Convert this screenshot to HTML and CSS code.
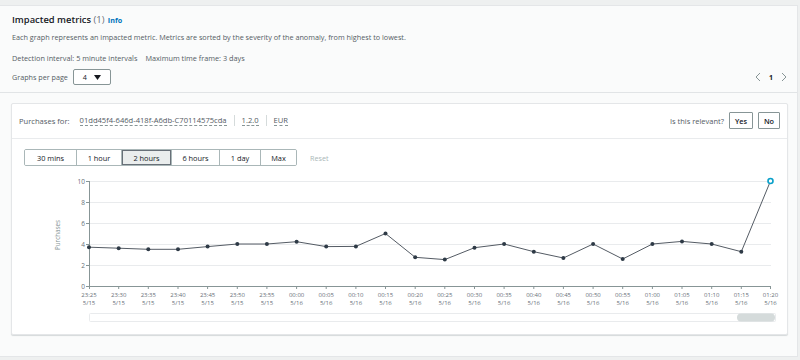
FILE: index.html
```html
<!DOCTYPE html>
<html>
<head>
<meta charset="utf-8">
<link rel="stylesheet" href="styles.css">
</head>
<body>
<div class="panel">
  <div class="header">
    <h2 class="title">Impacted metrics <span class="count">(1)</span> <a class="info">Info</a></h2>
    <p class="desc">Each graph represents an impacted metric. Metrics are sorted by the severity of the anomaly, from highest to lowest.</p>
    <p class="meta"><span>Detection interval: 5 minute intervals</span><span>Maximum time frame: 3 days</span></p>
    <div class="controls">
      <div class="gpp">
        <span>Graphs per page</span>
        <div class="select"><span>4</span><svg width="7" height="5" viewBox="0 0 7 5"><path d="M0 0H7L3.5 5Z" fill="#16191f"/></svg></div>
      </div>
      <div class="pager">
        <svg width="6" height="10" viewBox="0 0 6 10"><path d="M5 1L1 5L5 9" fill="none" stroke="#879596" stroke-width="1"/></svg>
        <span class="page">1</span>
        <svg width="6" height="10" viewBox="0 0 6 10"><path d="M1 1L5 5L1 9" fill="none" stroke="#879596" stroke-width="1"/></svg>
      </div>
    </div>
  </div>
  <div class="body">
    <div class="card">
      <div class="card-head">
        <div class="crumbs">
          <span class="label">Purchases for:</span>
          <span class="dotted">01dd45f4-646d-418f-A6db-C70114575cda</span>
          <span class="sep"></span>
          <span class="dotted">1.2.0</span>
          <span class="sep"></span>
          <span class="dotted">EUR</span>
        </div>
        <div class="relevant">
          <span class="label">Is this relevant?</span>
          <button class="btn">Yes</button>
          <button class="btn">No</button>
        </div>
      </div>
      <div class="tools">
        <div class="seg">
          <button class="s s1">30 mins</button>
          <button class="s s2">1 hour</button>
          <button class="s s3 active">2 hours</button>
          <button class="s s4">6 hours</button>
          <button class="s s5">1 day</button>
          <button class="s s6">Max</button>
        </div>
        <span class="reset">Reset</span>
      </div>
      <svg class="chart" width="774" height="164" viewBox="0 0 774 164">
        <g class="grid">
          <line x1="77" y1="11.5" x2="759" y2="11.5"/>
          <line x1="77" y1="32.5" x2="759" y2="32.5"/>
          <line x1="77" y1="53.5" x2="759" y2="53.5"/>
          <line x1="77" y1="74.5" x2="759" y2="74.5"/>
          <line x1="77" y1="95.5" x2="759" y2="95.5"/>
        </g>
        <g class="axis">
          <line x1="77.5" y1="11" x2="77.5" y2="116"/>
          <line x1="77" y1="116.5" x2="759" y2="116.5"/>
          <line x1="74" y1="11.5" x2="77" y2="11.5"/>
          <line x1="74" y1="32.5" x2="77" y2="32.5"/>
          <line x1="74" y1="53.5" x2="77" y2="53.5"/>
          <line x1="74" y1="74.5" x2="77" y2="74.5"/>
          <line x1="74" y1="95.5" x2="77" y2="95.5"/>
          <line x1="74" y1="116.5" x2="77" y2="116.5"/>
        </g>
        <g class="yl">
          <text x="73" y="14">10</text>
          <text x="73" y="35">8</text>
          <text x="73" y="56">6</text>
          <text x="73" y="77">4</text>
          <text x="73" y="98">2</text>
          <text x="73" y="119">0</text>
        </g>
        <text class="ytitle" transform="translate(48 65) rotate(-90)">Purchases</text>
        <g class="xt">
          <line x1="77.5" y1="116" x2="77.5" y2="119"/>
          <line x1="106.7" y1="116" x2="106.7" y2="119"/>
          <line x1="136.3" y1="116" x2="136.3" y2="119"/>
          <line x1="166" y1="116" x2="166" y2="119"/>
          <line x1="195.6" y1="116" x2="195.6" y2="119"/>
          <line x1="225.3" y1="116" x2="225.3" y2="119"/>
          <line x1="254.9" y1="116" x2="254.9" y2="119"/>
          <line x1="284.6" y1="116" x2="284.6" y2="119"/>
          <line x1="314.2" y1="116" x2="314.2" y2="119"/>
          <line x1="343.9" y1="116" x2="343.9" y2="119"/>
          <line x1="373.5" y1="116" x2="373.5" y2="119"/>
          <line x1="403.2" y1="116" x2="403.2" y2="119"/>
          <line x1="432.8" y1="116" x2="432.8" y2="119"/>
          <line x1="462.5" y1="116" x2="462.5" y2="119"/>
          <line x1="492.1" y1="116" x2="492.1" y2="119"/>
          <line x1="521.8" y1="116" x2="521.8" y2="119"/>
          <line x1="551.4" y1="116" x2="551.4" y2="119"/>
          <line x1="581.1" y1="116" x2="581.1" y2="119"/>
          <line x1="610.7" y1="116" x2="610.7" y2="119"/>
          <line x1="640.4" y1="116" x2="640.4" y2="119"/>
          <line x1="670" y1="116" x2="670" y2="119"/>
          <line x1="699.7" y1="116" x2="699.7" y2="119"/>
          <line x1="729.3" y1="116" x2="729.3" y2="119"/>
          <line x1="758.5" y1="116" x2="758.5" y2="119"/>
        </g>
        <g class="xl">
          <text x="77" y="126.5">23:25<tspan x="77" dy="8">5/15</tspan></text>
          <text x="106.7" y="126.5">23:30<tspan x="106.7" dy="8">5/15</tspan></text>
          <text x="136.3" y="126.5">23:35<tspan x="136.3" dy="8">5/15</tspan></text>
          <text x="166" y="126.5">23:40<tspan x="166" dy="8">5/15</tspan></text>
          <text x="195.6" y="126.5">23:45<tspan x="195.6" dy="8">5/15</tspan></text>
          <text x="225.3" y="126.5">23:50<tspan x="225.3" dy="8">5/15</tspan></text>
          <text x="254.9" y="126.5">23:55<tspan x="254.9" dy="8">5/15</tspan></text>
          <text x="284.6" y="126.5">00:00<tspan x="284.6" dy="8">5/16</tspan></text>
          <text x="314.2" y="126.5">00:05<tspan x="314.2" dy="8">5/16</tspan></text>
          <text x="343.9" y="126.5">00:10<tspan x="343.9" dy="8">5/16</tspan></text>
          <text x="373.5" y="126.5">00:15<tspan x="373.5" dy="8">5/16</tspan></text>
          <text x="403.2" y="126.5">00:20<tspan x="403.2" dy="8">5/16</tspan></text>
          <text x="432.8" y="126.5">00:25<tspan x="432.8" dy="8">5/16</tspan></text>
          <text x="462.5" y="126.5">00:30<tspan x="462.5" dy="8">5/16</tspan></text>
          <text x="492.1" y="126.5">00:35<tspan x="492.1" dy="8">5/16</tspan></text>
          <text x="521.8" y="126.5">00:40<tspan x="521.8" dy="8">5/16</tspan></text>
          <text x="551.4" y="126.5">00:45<tspan x="551.4" dy="8">5/16</tspan></text>
          <text x="581.1" y="126.5">00:50<tspan x="581.1" dy="8">5/16</tspan></text>
          <text x="610.7" y="126.5">00:55<tspan x="610.7" dy="8">5/16</tspan></text>
          <text x="640.4" y="126.5">01:00<tspan x="640.4" dy="8">5/16</tspan></text>
          <text x="670" y="126.5">01:05<tspan x="670" dy="8">5/16</tspan></text>
          <text x="699.7" y="126.5">01:10<tspan x="699.7" dy="8">5/16</tspan></text>
          <text x="729.3" y="126.5">01:15<tspan x="729.3" dy="8">5/16</tspan></text>
          <text x="758.5" y="126.5">01:20<tspan x="758.5" dy="8">5/16</tspan></text>
        </g>
        <polyline class="line" points="77,77.2 106.7,78.2 136.3,79.3 166,79.3 195.6,76.6 225.3,74 254.9,74 284.6,71.7 314.2,76.6 343.9,76.4 373.5,63.5 403.2,87.3 432.8,89.6 462.5,77.7 492.1,74 521.8,81.7 551.4,88 581.1,74 610.7,89 640.4,74 670,71.4 699.7,74 729.3,81.7 758.5,11"/>
        <g class="pts">
          <circle cx="77" cy="77.2" r="2"/>
          <circle cx="106.7" cy="78.2" r="2"/>
          <circle cx="136.3" cy="79.3" r="2"/>
          <circle cx="166" cy="79.3" r="2"/>
          <circle cx="195.6" cy="76.6" r="2"/>
          <circle cx="225.3" cy="74" r="2"/>
          <circle cx="254.9" cy="74" r="2"/>
          <circle cx="284.6" cy="71.7" r="2"/>
          <circle cx="314.2" cy="76.6" r="2"/>
          <circle cx="343.9" cy="76.4" r="2"/>
          <circle cx="373.5" cy="63.5" r="2"/>
          <circle cx="403.2" cy="87.3" r="2"/>
          <circle cx="432.8" cy="89.6" r="2"/>
          <circle cx="462.5" cy="77.7" r="2"/>
          <circle cx="492.1" cy="74" r="2"/>
          <circle cx="521.8" cy="81.7" r="2"/>
          <circle cx="551.4" cy="88" r="2"/>
          <circle cx="581.1" cy="74" r="2"/>
          <circle cx="610.7" cy="89" r="2"/>
          <circle cx="640.4" cy="74" r="2"/>
          <circle cx="670" cy="71.4" r="2"/>
          <circle cx="699.7" cy="74" r="2"/>
          <circle cx="729.3" cy="81.7" r="2"/>
        </g>
        <circle class="hl" cx="758.5" cy="11" r="2.5"/>
        <rect class="track" x="77.5" y="143.5" width="686" height="8" rx="1"/>
        <rect class="thumb" x="725" y="143.5" width="38" height="8" rx="4"/>
      </svg>
    </div>
  </div>
</div>
</body>
</html>
```

FILE: styles.css
```css
* { box-sizing: border-box; }
html, body { margin: 0; padding: 0; }
body {
  background: #eef0f0;
  font-family: "Open Sans", "Liberation Sans", sans-serif;
  color: #16191f;
  width: 800px;
  height: 360px;
  overflow: hidden;
}
.panel {
  margin-top: 5px;
  width: 798px;
  background: #fafbfb;
  border: 1px solid #e4e6e8;
  border-left: 0;
}
.header {
  padding: 6px 10px 7px 12px;
  border-bottom: 1px solid #e1e4e6;
}
.title {
  margin: 0;
  font-size: 9.4px;
  line-height: 16px;
  font-weight: 600;
  color: #16191f;
}
.count { font-weight: 400; color: #687078; }
.info { color: #0073bb; font-size: 7.2px; font-weight: 700; margin-left: 1px; }
.desc {
  margin: 3px 0 0;
  font-size: 7.25px;
  line-height: 12px;
  color: #545b64;
}
.meta {
  margin: 9px 0 0;
  font-size: 7.3px;
  line-height: 12px;
  color: #545b64;
  display: flex;
  gap: 8px;
}
.controls {
  margin-top: 5px;
  display: flex;
  justify-content: space-between;
  align-items: center;
  height: 16px;
}
.gpp {
  display: flex;
  align-items: center;
  gap: 5px;
  font-size: 7.2px;
  color: #545b64;
}
.select {
  width: 38px;
  height: 16px;
  border: 1px solid #879596;
  border-radius: 2px;
  background: #fff;
  display: flex;
  align-items: center;
  justify-content: center;
  gap: 7px;
  font-size: 7.2px;
  color: #16191f;
}
.pager {
  display: flex;
  align-items: center;
  gap: 8px;
  font-size: 7px;
  font-weight: 700;
  color: #16191f;
}
.body {
  padding: 10px 9px 21px 11px;
}
.card {
  background: #fff;
  border: 1px solid #e4e6e8;
  border-radius: 2px;
  box-shadow: 0 1px 1px rgba(0, 28, 36, 0.15);
}
.card-head {
  height: 35px;
  border-bottom: 1px solid #e9ebed;
  display: flex;
  justify-content: space-between;
  align-items: center;
  padding: 0 7px 1px 7px;
}
.crumbs {
  display: flex;
  align-items: center;
  font-size: 7.6px;
  color: #545b64;
}
.crumbs .label { margin-right: 10px; }
.dotted {
  border-bottom: 1px dashed #879596;
  line-height: 10px;
}
.sep {
  width: 1px;
  height: 11px;
  background: #d5dbdb;
  margin: 0 7px;
}
.relevant {
  display: flex;
  align-items: center;
  gap: 5px;
  font-size: 7.5px;
  color: #545b64;
}
.btn {
  height: 17px;
  padding: 0;
  border: 1px solid #879596;
  border-radius: 1px;
  background: #fff;
  font-family: inherit;
  font-size: 7.3px;
  font-weight: 600;
  color: #16191f;
}
.btn:first-of-type { width: 24px; }
.btn:last-of-type { width: 22px; }
.tools {
  padding: 10px 0 0 12px;
  display: flex;
  align-items: center;
  gap: 13px;
}
.seg {
  display: flex;
  border: 1px solid #aab7b8;
  border-radius: 2px;
  height: 17px;
  overflow: hidden;
}
.s {
  padding: 0;
  margin: 0;
  height: 15px;
  border: 0;
  border-left: 1px solid #aab7b8;
  background: #fff;
  font-family: inherit;
  font-size: 7.4px;
  color: #16191f;
}
.s1 { border-left: 0; width: 51px; }
.s2 { width: 45px; }
.s3 { width: 50px; }
.s4 { width: 48px; }
.s5 { width: 41px; }
.s6 { width: 36px; }
.s.active {
  background: #eaeded;
  box-shadow: inset 0 0 0 1px #687078;
}
.reset { font-size: 7.2px; color: #aab7b8; }
.chart { display: block; margin-top: 4px; }
.grid line { stroke: #e9ebed; stroke-width: 1; }
.axis line { stroke: #879596; stroke-width: 1; }
.xt line { stroke: #879596; stroke-width: 1; }
.yl text { font-size: 6.5px; fill: #687078; text-anchor: end; font-family: "Open Sans", sans-serif; }
.xl text { font-size: 6px; fill: #687078; text-anchor: middle; font-family: "Open Sans", sans-serif; }
.ytitle { font-size: 6.3px; fill: #879596; text-anchor: middle; font-family: "Open Sans", sans-serif; }
.line { fill: none; stroke: #545b64; stroke-width: 1; }
.pts circle { fill: #2e3a46; }
.hl { fill: #fff; stroke: #0aa0c9; stroke-width: 1.6; }
.track { fill: #fff; stroke: #e9ebed; stroke-width: 1; }
.thumb { fill: #d5dbdb; }
```
